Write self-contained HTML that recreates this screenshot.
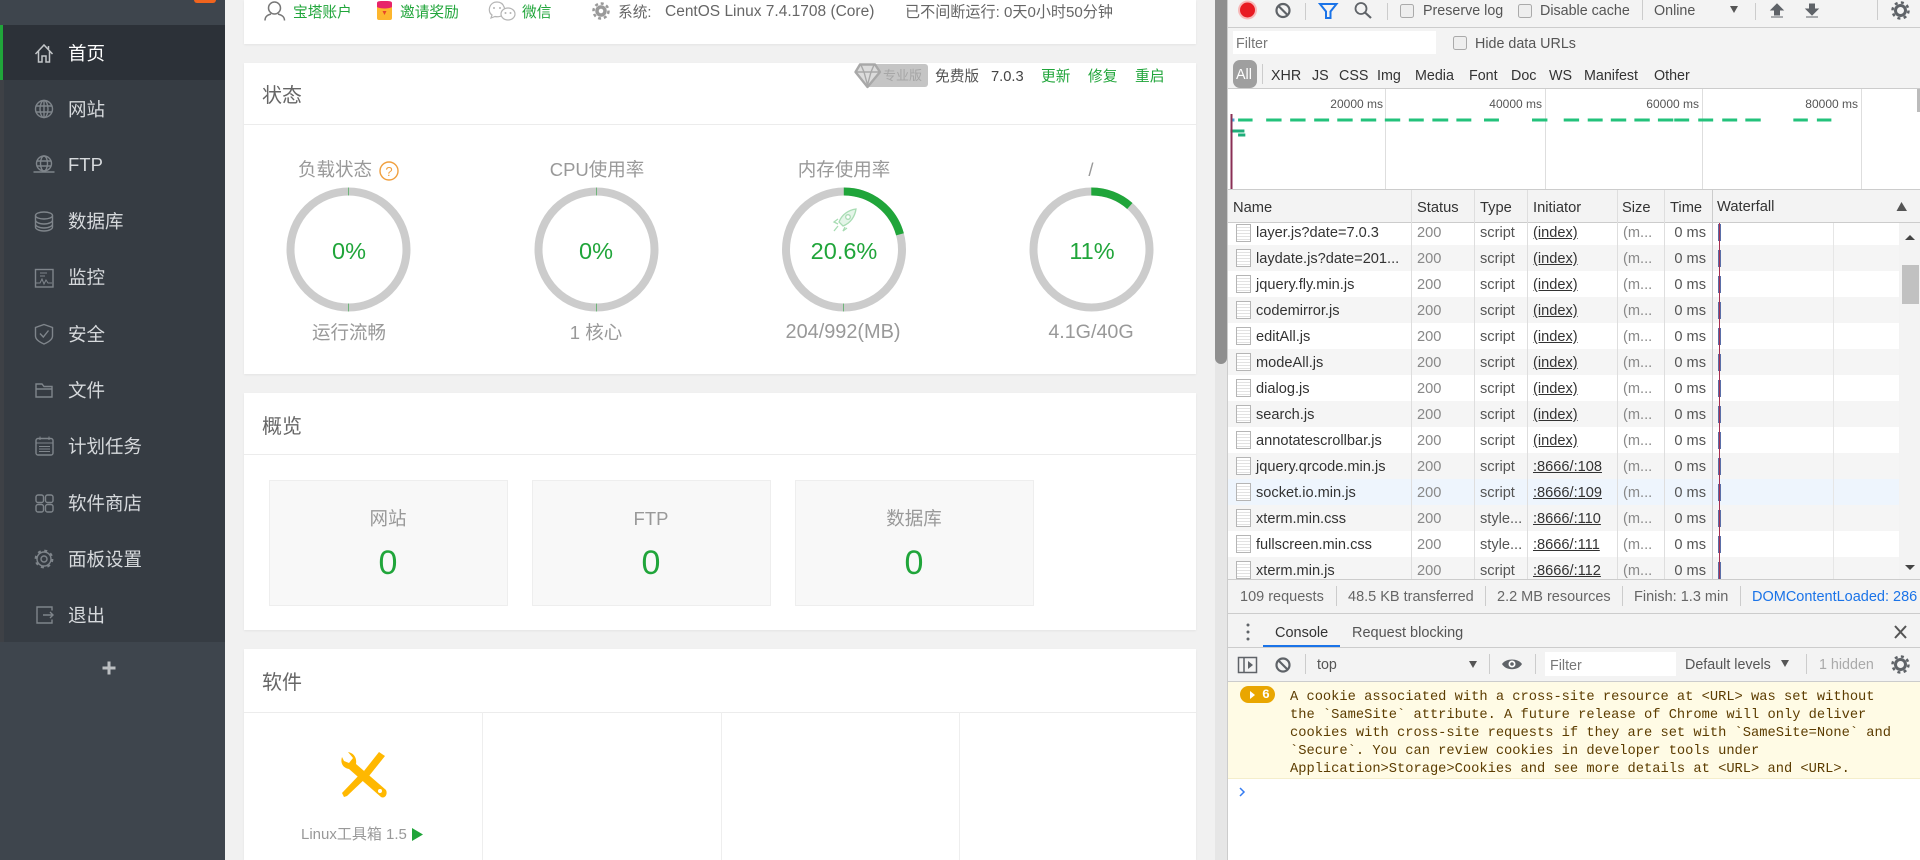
<!DOCTYPE html>
<html lang="zh-CN">
<head>
<meta charset="utf-8">
<title>宝塔面板</title>
<style>
html,body{margin:0;padding:0;width:1920px;height:860px;overflow:hidden;background:#fff}
body{position:relative;font-family:"Liberation Sans","Noto Sans CJK SC",sans-serif;color:#555}
.a{position:absolute}
.t{position:absolute;white-space:nowrap;line-height:20px;height:20px}
.c{transform:translateX(-50%)}
.card{position:absolute;left:244px;width:952px;background:#fff;box-shadow:0 1px 2px rgba(0,0,0,.06)}
.hl{position:absolute;left:244px;width:952px;height:1px;background:#ececec}
.m{font-size:18.5px;color:#d6d9dc;left:68px;line-height:24px;height:24px}
.ct{font-size:20px;color:#666;left:262px;line-height:28px;height:28px}
.tt{font-size:18.5px;color:#999;line-height:26px;height:26px}
.pc{font-size:23.5px;color:#20a53a;line-height:30px;height:30px}
.g{color:#20a53a;font-size:14.7px}
.box{position:absolute;top:480px;height:124px;background:#f8f8f8;border:1px solid #eee}
.bl{font-size:18.5px;color:#999;line-height:26px;height:26px}
.bn{font-size:34px;color:#20a53a;line-height:40px;height:40px}
.d{font-size:14.3px;color:#555}
.r{position:absolute;left:1228px;width:671px;height:26px;background:#fff;overflow:hidden;font-size:14.6px;line-height:26px}
.r.o{background:#f5f5f5}
.r span{position:absolute;top:1px;white-space:nowrap}
.r i{position:absolute;left:8px;top:4px;width:13px;height:16px;border:1px solid #b5b5b5;background:repeating-linear-gradient(#fff 0 2px,#e2e2e2 2px 3px);box-sizing:content-box}
.n{left:28px;color:#333}.s{left:189px;color:#888}.y{left:252px;color:#555}.q{left:305px;color:#333;text-decoration:underline}.z{left:395px;color:#888}
.e{left:439px;width:39px;text-align:right;color:#555}
.v{position:absolute;width:1px;background:#dedede}
.hd{font-size:14.7px;color:#333}
.ms{position:absolute;left:1290px;font-family:"Liberation Mono",monospace;font-size:13.73px;line-height:18px;color:#5c3c00;white-space:pre;top:689px}
</style>
</head>
<body>
<!-- Page background -->
<div class="a" style="left:225px;top:0;width:990px;height:860px;background:#f1f1f1"></div>
<!-- Sidebar -->
<div class="a" style="left:0;top:0;width:225px;height:860px;background:#3e454d"></div>
<div class="a" style="left:0;top:25px;width:225px;height:617px;background:#363c43"></div>
<div class="a" style="left:0;top:80px;width:4px;height:562px;background:#3e4146"></div>
<div class="a" style="left:0;top:25px;width:225px;height:55px;background:#2c3138"></div>
<div class="a" style="left:0;top:25px;width:3px;height:55px;background:#20a53a"></div>
<div class="a" style="left:194px;top:0;width:22px;height:3px;background:#f0641e;border-radius:0 0 4px 4px"></div>
<span class="t m" style="top:42px;color:#fff">首页</span>
<span class="t m" style="top:98px">网站</span>
<span class="t m" style="top:153px">FTP</span>
<span class="t m" style="top:210px">数据库</span>
<span class="t m" style="top:266px">监控</span>
<span class="t m" style="top:323px">安全</span>
<span class="t m" style="top:379px">文件</span>
<span class="t m" style="top:435px">计划任务</span>
<span class="t m" style="top:492px">软件商店</span>
<span class="t m" style="top:548px">面板设置</span>
<span class="t m" style="top:604px">退出</span>

<!-- Cards -->
<div class="card" style="top:0;height:44px"></div>
<div class="card" style="top:63px;height:311px"></div>
<div class="hl" style="top:124px"></div>
<div class="card" style="top:393px;height:237px"></div>
<div class="hl" style="top:454px"></div>
<div class="card" style="top:649px;height:211px"></div>
<div class="hl" style="top:712px"></div>
<div class="v" style="left:482px;top:712px;height:148px;background:#eee"></div>
<div class="v" style="left:721px;top:712px;height:148px;background:#eee"></div>
<div class="v" style="left:959px;top:712px;height:148px;background:#eee"></div>

<!-- Top row -->
<span class="t g" style="left:293px;top:3px">宝塔账户</span>
<span class="t g" style="left:400px;top:3px">邀请奖励</span>
<span class="t g" style="left:522px;top:3px">微信</span>
<span class="t" style="left:618px;top:3px;font-size:14.7px;color:#666">系统:</span>
<span class="t" style="left:665px;top:2px;font-size:15.5px;color:#666">CentOS Linux 7.4.1708 (Core)</span>
<span class="t" style="left:905px;top:3px;font-size:15.1px;color:#666">已不间断运行: 0天0小时50分钟</span>

<!-- Status -->
<span class="t ct" style="top:82px">状态</span>
<div class="a" style="left:866px;top:64px;width:62px;height:23px;background:#c5c5c5;border-radius:3px"></div>
<span class="t" style="left:883px;top:66px;font-size:13px;color:#a6a6a6">专业版</span>
<span class="t" style="left:935px;top:67px;font-size:14.7px;color:#555">免费版</span>
<span class="t" style="left:991px;top:67px;font-size:14.7px;color:#444">7.0.3</span>
<span class="t g" style="left:1041px;top:67px">更新</span>
<span class="t g" style="left:1088px;top:67px">修复</span>
<span class="t g" style="left:1135px;top:67px">重启</span>

<span class="t tt" style="left:298px;top:157px">负载状态</span>
<span class="t tt c" style="left:597px;top:157px">CPU使用率</span>
<span class="t tt c" style="left:844px;top:157px">内存使用率</span>
<span class="t tt c" style="left:1091px;top:157px">/</span>
<span class="t pc c" style="left:349px;top:236px">0%</span>
<span class="t pc c" style="left:596px;top:236px">0%</span>
<span class="t pc c" style="left:844px;top:236px">20.6%</span>
<span class="t pc c" style="left:1092px;top:236px">11%</span>
<span class="t tt c" style="left:349px;top:320px">运行流畅</span>
<span class="t tt c" style="left:596px;top:320px">1 核心</span>
<span class="t tt c" style="left:843px;top:319px;font-size:19.9px">204/992(MB)</span>
<span class="t tt c" style="left:1091px;top:319px;font-size:19.7px">4.1G/40G</span>

<!-- Overview -->
<span class="t ct" style="top:413px">概览</span>
<div class="box" style="left:269px;width:237px"></div>
<div class="box" style="left:532px;width:237px"></div>
<div class="box" style="left:795px;width:237px"></div>
<span class="t bl c" style="left:388px;top:506px">网站</span>
<span class="t bl c" style="left:651px;top:506px">FTP</span>
<span class="t bl c" style="left:914px;top:506px">数据库</span>
<span class="t bn c" style="left:388px;top:543px">0</span>
<span class="t bn c" style="left:651px;top:543px">0</span>
<span class="t bn c" style="left:914px;top:543px">0</span>

<!-- Software -->
<span class="t ct" style="top:669px">软件</span>
<span class="t" style="left:301px;top:825px;font-size:15px;color:#999">Linux工具箱 1.5</span>

<!-- Page scrollbar -->
<div class="a" style="left:1215px;top:0;width:12px;height:860px;background:#e6e6e6"></div>
<div class="a" style="left:1215px;top:0;width:12px;height:364px;background:#8f8f8f;border-radius:0 0 6px 6px"></div>

<!-- DevTools -->
<div class="a" style="left:1227px;top:0;width:693px;height:860px;background:#f3f3f3"></div>
<div class="a" style="left:1227px;top:0;width:1px;height:860px;background:#ccc"></div>
<div class="a" style="left:1228px;top:27px;width:692px;height:1px;background:#ccc"></div>
<div class="a" style="left:1233px;top:31px;width:203px;height:23px;background:#fff"></div>
<span class="t d" style="left:1236px;top:34px;color:#777">Filter</span>
<span class="t d" style="left:1423px;top:1px">Preserve log</span>
<span class="t d" style="left:1540px;top:1px">Disable cache</span>
<span class="t d" style="left:1654px;top:1px">Online</span>
<span class="t d" style="left:1475px;top:34px">Hide data URLs</span>
<div class="a" style="left:1233px;top:60px;width:24px;height:28px;background:#9f9f9f;border-radius:7px"></div>
<span class="t d" style="left:1236px;top:65px;color:#fff">All</span>
<div class="a" style="left:1262px;top:64px;width:1px;height:20px;background:#ccc"></div>
<span class="t d" style="left:1271px;top:66px;color:#333">XHR</span>
<span class="t d" style="left:1312px;top:66px;color:#333">JS</span>
<span class="t d" style="left:1339px;top:66px;color:#333">CSS</span>
<span class="t d" style="left:1377px;top:66px;color:#333">Img</span>
<span class="t d" style="left:1415px;top:66px;color:#333">Media</span>
<span class="t d" style="left:1469px;top:66px;color:#333">Font</span>
<span class="t d" style="left:1511px;top:66px;color:#333">Doc</span>
<span class="t d" style="left:1549px;top:66px;color:#333">WS</span>
<span class="t d" style="left:1584px;top:66px;color:#333">Manifest</span>
<span class="t d" style="left:1654px;top:66px;color:#333">Other</span>

<!-- Overview timeline -->
<div class="a" style="left:1228px;top:88px;width:692px;height:102px;background:#fff;border-top:1px solid #ccc;border-bottom:1px solid #ccc;box-sizing:border-box"></div>
<div class="v" style="left:1385px;top:89px;height:100px"></div>
<div class="v" style="left:1545px;top:89px;height:100px"></div>
<div class="v" style="left:1702px;top:89px;height:100px"></div>
<div class="v" style="left:1861px;top:89px;height:100px"></div>
<span class="t" style="right:537px;top:94px;font-size:12px;color:#555">20000 ms</span>
<span class="t" style="right:378px;top:94px;font-size:12px;color:#555">40000 ms</span>
<span class="t" style="right:221px;top:94px;font-size:12px;color:#555">60000 ms</span>
<span class="t" style="right:62px;top:94px;font-size:12px;color:#555">80000 ms</span>

<!-- Header row -->
<div class="a" style="left:1228px;top:190px;width:692px;height:33px;background:#f3f3f3;border-bottom:1px solid #ccc;box-sizing:border-box"></div>
<span class="t hd" style="left:1233px;top:198px">Name</span>
<span class="t hd" style="left:1417px;top:198px">Status</span>
<span class="t hd" style="left:1480px;top:198px">Type</span>
<span class="t hd" style="left:1533px;top:198px">Initiator</span>
<span class="t hd" style="left:1622px;top:198px">Size</span>
<span class="t hd" style="left:1670px;top:198px">Time</span>
<span class="t hd" style="left:1717px;top:197px">Waterfall</span>

<!-- Rows -->
<div class="r" style="top:223px;height:22px"><i style="top:1px"></i><span class="n" style="top:-3px">layer.js?date=7.0.3</span><span class="s" style="top:-3px">200</span><span class="y" style="top:-3px">script</span><span class="q" style="top:-3px">(index)</span><span class="z" style="top:-3px">(m...</span><span class="e" style="top:-3px">0 ms</span></div>
<div class="r o" style="top:245px"><i></i><span class="n">laydate.js?date=201...</span><span class="s">200</span><span class="y">script</span><span class="q">(index)</span><span class="z">(m...</span><span class="e">0 ms</span></div>
<div class="r" style="top:271px"><i></i><span class="n">jquery.fly.min.js</span><span class="s">200</span><span class="y">script</span><span class="q">(index)</span><span class="z">(m...</span><span class="e">0 ms</span></div>
<div class="r o" style="top:297px"><i></i><span class="n">codemirror.js</span><span class="s">200</span><span class="y">script</span><span class="q">(index)</span><span class="z">(m...</span><span class="e">0 ms</span></div>
<div class="r" style="top:323px"><i></i><span class="n">editAll.js</span><span class="s">200</span><span class="y">script</span><span class="q">(index)</span><span class="z">(m...</span><span class="e">0 ms</span></div>
<div class="r o" style="top:349px"><i></i><span class="n">modeAll.js</span><span class="s">200</span><span class="y">script</span><span class="q">(index)</span><span class="z">(m...</span><span class="e">0 ms</span></div>
<div class="r" style="top:375px"><i></i><span class="n">dialog.js</span><span class="s">200</span><span class="y">script</span><span class="q">(index)</span><span class="z">(m...</span><span class="e">0 ms</span></div>
<div class="r o" style="top:401px"><i></i><span class="n">search.js</span><span class="s">200</span><span class="y">script</span><span class="q">(index)</span><span class="z">(m...</span><span class="e">0 ms</span></div>
<div class="r" style="top:427px"><i></i><span class="n">annotatescrollbar.js</span><span class="s">200</span><span class="y">script</span><span class="q">(index)</span><span class="z">(m...</span><span class="e">0 ms</span></div>
<div class="r o" style="top:453px"><i></i><span class="n">jquery.qrcode.min.js</span><span class="s">200</span><span class="y">script</span><span class="q">:8666/:108</span><span class="z">(m...</span><span class="e">0 ms</span></div>
<div class="r" style="top:479px;background:#eef5fd"><i></i><span class="n">socket.io.min.js</span><span class="s">200</span><span class="y">script</span><span class="q">:8666/:109</span><span class="z">(m...</span><span class="e">0 ms</span></div>
<div class="r o" style="top:505px"><i></i><span class="n">xterm.min.css</span><span class="s">200</span><span class="y">style...</span><span class="q">:8666/:110</span><span class="z">(m...</span><span class="e">0 ms</span></div>
<div class="r" style="top:531px"><i></i><span class="n">fullscreen.min.css</span><span class="s">200</span><span class="y">style...</span><span class="q">:8666/:111</span><span class="z">(m...</span><span class="e">0 ms</span></div>
<div class="r o" style="top:557px;height:22px"><i></i><span class="n">xterm.min.js</span><span class="s">200</span><span class="y">script</span><span class="q">:8666/:112</span><span class="z">(m...</span><span class="e">0 ms</span></div>
<div class="v" style="left:1411px;top:190px;height:389px"></div>
<div class="v" style="left:1474px;top:190px;height:389px"></div>
<div class="v" style="left:1527px;top:190px;height:389px"></div>
<div class="v" style="left:1617px;top:190px;height:389px"></div>
<div class="v" style="left:1664px;top:190px;height:389px"></div>
<div class="v" style="left:1712px;top:190px;height:389px;background:#ccc"></div>
<div class="v" style="left:1833px;top:223px;height:356px;background:#e6e6e6"></div>
<div class="a" style="left:1899px;top:223px;width:21px;height:356px;background:#f3f3f3"></div>
<div class="a" style="left:1902px;top:265px;width:17px;height:39px;background:#c1c1c1"></div>

<!-- Status bar -->
<div class="a" style="left:1228px;top:579px;width:692px;height:1px;background:#ccc"></div>
<div class="a" style="left:1228px;top:613px;width:692px;height:1px;background:#ccc"></div>
<span class="t" style="left:1240px;top:587px;font-size:14.5px;color:#666">109 requests</span>
<span class="t" style="left:1348px;top:587px;font-size:14.5px;color:#666">48.5 KB transferred</span>
<span class="t" style="left:1497px;top:587px;font-size:14.5px;color:#666">2.2 MB resources</span>
<span class="t" style="left:1634px;top:587px;font-size:14.5px;color:#666">Finish: 1.3 min</span>
<div class="a" style="left:1752px;top:587px;width:168px;height:20px;overflow:hidden"><span class="t" style="left:0;top:0;font-size:14.5px;color:#1a73e8">DOMContentLoaded: 286 ms</span></div>
<div class="v" style="left:1336px;top:586px;height:20px;background:#ccc"></div>
<div class="v" style="left:1485px;top:586px;height:20px;background:#ccc"></div>
<div class="v" style="left:1622px;top:586px;height:20px;background:#ccc"></div>
<div class="v" style="left:1740px;top:586px;height:20px;background:#ccc"></div>

<!-- Drawer tabs -->
<span class="t" style="left:1275px;top:623px;font-size:14.5px;color:#333">Console</span>
<span class="t" style="left:1352px;top:623px;font-size:14.5px;color:#555">Request blocking</span>
<div class="a" style="left:1263px;top:645px;width:77px;height:2px;background:#1a73e8"></div>
<div class="a" style="left:1228px;top:647px;width:692px;height:1px;background:#ccc"></div>

<!-- Console toolbar -->
<span class="t d" style="left:1317px;top:655px">top</span>
<div class="a" style="left:1545px;top:652px;width:131px;height:24px;background:#fff"></div>
<span class="t d" style="left:1550px;top:656px;color:#777">Filter</span>
<span class="t d" style="left:1685px;top:655px">Default levels</span>
<span class="t d" style="left:1819px;top:655px;color:#aaa">1 hidden</span>
<div class="v" style="left:1305px;top:654px;height:20px;background:#ccc"></div>
<div class="v" style="left:1489px;top:654px;height:20px;background:#ccc"></div>
<div class="v" style="left:1535px;top:654px;height:20px;background:#ccc"></div>
<div class="v" style="left:1806px;top:654px;height:20px;background:#ccc"></div>
<div class="a" style="left:1228px;top:681px;width:692px;height:1px;background:#ccc"></div>

<!-- Console area -->
<div class="a" style="left:1228px;top:682px;width:692px;height:178px;background:#fff"></div>
<div class="a" style="left:1228px;top:682px;width:692px;height:97px;background:#fffbe5;border-bottom:1px solid #f5eecb;box-sizing:border-box"></div>
<div class="a" style="left:1240px;top:686px;width:35px;height:17px;background:#e9a600;border-radius:9px"></div>
<span class="t" style="left:1262px;top:687px;height:16px;line-height:16px;font-family:'Liberation Mono',monospace;font-weight:bold;font-size:13px;color:#fff">6</span>
<div class="ms">A cookie associated with a cross-site resource at &lt;URL&gt; was set without
the `SameSite` attribute. A future release of Chrome will only deliver
cookies with cross-site requests if they are set with `SameSite=None` and
`Secure`. You can review cookies in developer tools under
Application&gt;Storage&gt;Cookies and see more details at &lt;URL&gt; and &lt;URL&gt;.</div>

<!-- All icons / graphic overlay -->
<svg class="a" style="left:0;top:0" width="1920" height="860" viewBox="0 0 1920 860" fill="none">
  <!-- Status circles -->
  <g stroke-width="8">
    <circle cx="348.5" cy="249.5" r="58" stroke="#ccc"/>
    <circle cx="596.5" cy="249.5" r="58" stroke="#ccc"/>
    <circle cx="844" cy="249.5" r="58" stroke="#ccc"/>
    <circle cx="1091.5" cy="249.5" r="58" stroke="#ccc"/>
    <circle cx="844" cy="249.5" r="58" stroke="#20a53a" pathLength="100" stroke-dasharray="20.8 79.2" transform="rotate(-90 844 249.5)"/>
    <circle cx="1091.5" cy="249.5" r="58" stroke="#20a53a" pathLength="100" stroke-dasharray="11.5 88.5" transform="rotate(-90 1091.5 249.5)"/>
  </g>
  <path d="M348.5 187.500V195.500M348.500 303.500V311.500M596.500 187.500V195.500M596.500 303.500V311.500M843.500 303.500V311.500" stroke="#6fb57a" stroke-width="1"/>
  <!-- Question mark -->
  <circle cx="389" cy="171" r="9" stroke="#f0a040" stroke-width="1.400"/>
  <text x="389" y="176" font-size="13" fill="#f0a040" text-anchor="middle" font-family="Liberation Sans">?</text>
  <!-- Rocket -->
  <g stroke="#a8dcb3" stroke-width="1.300" fill="#e4f5e8">
    <path d="M856 209C849 210 842 214 839 222L843 226C851 223 855 216 856 209Z"/>
    <circle cx="848" cy="217" r="2.300" fill="#fff"/>
    <path d="M838 219L834 222L838 224M845 227L843 231L847 228M838 226L834 231" fill="none"/>
  </g>
  <!-- Sidebar icons -->
  <g stroke="#7f858b" stroke-width="1.400">
    <path d="M35.500 54L44 45L52.500 54M38.500 51V62H42V56H46V62H49.500V51M48.500 46V49" stroke="#c2c5c8" stroke-width="1.500"/>
    <circle cx="44" cy="109" r="8.500"/><ellipse cx="44" cy="109" rx="4" ry="8.500"/><path d="M36 106H52M36 112H52M44 100.500V117.500"/>
    <circle cx="44" cy="163.500" r="7.500"/><ellipse cx="44" cy="163.500" rx="3.500" ry="7.500"/><path d="M37 161H51M37 166H51M33.500 172H54.500"/>
    <ellipse cx="44" cy="215.500" rx="8.500" ry="3.500"/><path d="M35.500 215.500V227C35.500 229 39 231 44 231S52.500 229 52.500 227V215.500M35.500 220C35.500 222 39 224 44 224S52.500 222 52.500 220M35.500 224C35.500 226 39 228 44 228S52.500 226 52.500 224"/>
    <rect x="35.500" y="269.500" width="17.500" height="17.500"/><path d="M36 283L40 283L42 279L44 284L46 280L48 283L52 283M40 273H47M40 276H45" stroke-width="1"/>
    <path d="M44 324.500L52.500 327.500V336C52.500 340 47.500 342.500 44 344C40.500 342.500 35.500 340 35.500 336V327.500Z"/><path d="M40 333.500L43.300 337L48.500 330.500"/>
    <path d="M36 397V384H42L44 386.500H52V397ZM36 389H52"/>
    <rect x="36" y="438.500" width="17" height="16.500" rx="2"/><path d="M36 443H53M40 436.500V440M49 436.500V440M39 446.500H50M39 449H50M39 451.500H50" stroke-width="1"/>
    <rect x="36" y="495" width="7.500" height="7.500" rx="2"/><rect x="45.500" y="495" width="7.500" height="7.500" rx="2"/><rect x="36" y="504.500" width="7.500" height="7.500" rx="2"/><rect x="45.500" y="504.500" width="7.500" height="7.500" rx="2"/>
    <circle cx="44" cy="559" r="7"/><circle cx="44" cy="559" r="3"/><circle cx="44" cy="559" r="8.400" stroke-width="2" stroke-dasharray="3 3.600"/>
    <path d="M52 610.500V607H37V623H52V619.500M43 615H53M50 612L53 615L50 618"/>
  </g>
  <path d="M102.500 668H115.500M109 661.500V674.500" stroke="#bcbfc2" stroke-width="3"/>
  <!-- Top row icons -->
  <g stroke="#777" stroke-width="1.500">
    <circle cx="274.500" cy="8" r="6"/><path d="M265 20.500C265 16 268 15 271 14M284.500 20.500C284.500 16 281 15 278 14"/>
  </g>
  <rect x="377" y="3" width="15" height="17" rx="2" fill="#fdb62e"/>
  <path d="M377 3C377 1 380 1 384.500 1S392 1 392 3V7C389 9 380 9 377 7Z" fill="#e7246a"/>
  <path d="M382.500 11H386.500L384.500 15Z" fill="#e7462a"/>
  <g stroke="#b5b5b5" stroke-width="1.200">
    <path d="M504 15C506 12 505 2 497 2C489 2 487 12 492 15L491 18L495 16.500C497 17 500 16.800 504 15Z"/>
    <ellipse cx="508" cy="14" rx="7" ry="6" fill="#fff"/>
  </g>
  <g fill="#b5b5b5"><circle cx="494" cy="8" r="1"/><circle cx="500" cy="8" r="1"/><circle cx="505.500" cy="13" r="1"/><circle cx="510.500" cy="13" r="1"/></g>
  <circle cx="601" cy="11" r="4" stroke="#9a9a9a" stroke-width="3.500"/>
  <circle cx="601" cy="11" r="7.500" stroke="#9a9a9a" stroke-width="2.500" stroke-dasharray="3 2.800"/>
  <!-- Diamond -->
  <path d="M860 64.500H875L880 72L867.500 87L855.500 72Z" fill="#dcdcdc" stroke="#a8a8a8" stroke-width="2.400" stroke-linejoin="round"/>
  <path d="M856 72H879.500M861 65L864 72L867.500 85M874 65L871 72L867.500 85" stroke="#a8a8a8" stroke-width="1.400"/>
  <!-- Tools icon -->
  <g fill="#ffb800">
    <path d="M385 756L379 752L364 771L369 776Z"/>
    <path d="M344 797L342 793L362 772L367 777L347 796Z"/>
    <path d="M342 757C340 763 343 768 349 769L381 797C385 799 388 794 386 790L356 764C357 758 354 753 348 752L353 758L349 763L344 761Z"/>
  </g>
  <circle cx="380" cy="791" r="2" fill="#fff"/>
  <path d="M412 828L423 834.500L412 841Z" fill="#20a53a"/>
  <!-- Timeline dashes -->
  <g transform="translate(1210 0) scale(.4529 1)" stroke="#23c27b" stroke-width="3">
    <path d="M62 120H94M124 120H158M177 120H211M230 120H263M281 120H315M333 120H367M386 120H420M439 120H472M491 120H526M544 120H577M605 120H638M711 120H745M781 120H815M834 120H867M885 120H919M937 120H971M989 120H1023M1025 120H1058M1078 120H1111M1131 120H1164M1182 120H1216M1288 120H1320M1340 120H1372"/>
    <path d="M45 131H76M62 135H78" stroke="#1fae7a"/>
    <path d="M46 120H54" stroke="#4aa8d8"/>
  </g>
  <path d="M1231.500 114V189" stroke="#8a2f55" stroke-width="2"/>
  <rect x="1917" y="89" width="3" height="23" fill="#bbb"/>
  <!-- Waterfall row ticks -->
  <path d="M1719.500 224V579" stroke="#5b6fa8" stroke-width="3" stroke-dasharray="17 9"/>
  <path d="M1719.500 223V579" stroke="#a83050" stroke-width="1"/>
  <!-- DevTools top toolbar -->
  <circle cx="1247.500" cy="10" r="9.500" fill="#f7b8b8"/>
  <circle cx="1247.500" cy="10" r="7.500" fill="#e81a22"/>
  <circle cx="1283" cy="10.500" r="6.500" stroke="#5f6368" stroke-width="2.200"/><path d="M1278.500 6L1287.500 15" stroke="#5f6368" stroke-width="2.200"/>
  <path d="M1320 4H1336.500L1330.500 11.500V18H1326V11.500Z" stroke="#1a73e8" stroke-width="2"/>
  <circle cx="1361" cy="8.500" r="5.500" stroke="#5f6368" stroke-width="1.800"/><path d="M1365 12.500L1371 18" stroke="#5f6368" stroke-width="2.200"/>
  <g stroke="#ccc"><path d="M1305.500 3V20M1387.500 3V20M1642.500 0V20M1755.500 3V20M1877.500 0V20"/></g>
  <g fill="#eee" stroke="#aaa"><rect x="1400.500" y="4.500" width="13" height="13" rx="2"/><rect x="1518.500" y="4.500" width="13" height="13" rx="2"/><rect x="1453.500" y="36.500" width="13" height="13" rx="2"/></g>
  <path d="M1730 6H1738L1734 13Z" fill="#555"/>
  <path d="M1777 4L1783 10H1779.500V15H1774.500V10H1771ZM1771 17H1783" stroke="#5f6368" fill="#5f6368" stroke-width="1"/>
  <path d="M1812 15L1806 9H1809.500V4H1814.500V9H1818ZM1806 17H1818" stroke="#5f6368" fill="#5f6368" stroke-width="1"/>
  <circle cx="1900.500" cy="10.500" r="5" stroke="#5f6368" stroke-width="3"/><circle cx="1900.500" cy="10.500" r="8" stroke="#5f6368" stroke-width="2.500" stroke-dasharray="3 3.300"/>
  <path d="M1901.500 202L1896.500 211H1907Z" fill="#555"/>
  <path d="M1905 240H1915L1910 235Z" fill="#444"/><path d="M1905 565H1915L1910 570Z" fill="#444"/>
  <!-- Drawer -->
  <g fill="#5f6368"><circle cx="1248" cy="625" r="1.500"/><circle cx="1248" cy="632" r="1.500"/><circle cx="1248" cy="639" r="1.500"/></g>
  <path d="M1895 626L1906 638M1906 626L1895 638" stroke="#555" stroke-width="2"/>
  <!-- Console toolbar -->
  <rect x="1238.500" y="657.500" width="18" height="15" stroke="#5f6368" stroke-width="1.500"/><path d="M1244 657.500V672.500" stroke="#5f6368" stroke-width="1.500"/><path d="M1248 661L1253 665L1248 669Z" fill="#5f6368"/>
  <circle cx="1283" cy="665" r="6.500" stroke="#5f6368" stroke-width="2.200"/><path d="M1278.500 660.500L1287.500 669.500" stroke="#5f6368" stroke-width="2.200"/>
  <path d="M1469 661H1477L1473 668Z" fill="#555"/>
  <path d="M1502 664C1506 658 1518 658 1522 664C1518 671 1506 671 1502 664Z" fill="#5f6368"/><circle cx="1512" cy="664" r="3.500" fill="#fff"/><circle cx="1512" cy="664" r="1.800" fill="#5f6368"/>
  <path d="M1781 660H1789L1785 667Z" fill="#555"/>
  <circle cx="1900.500" cy="664.500" r="5" stroke="#5f6368" stroke-width="3"/><circle cx="1900.500" cy="664.500" r="8" stroke="#5f6368" stroke-width="2.500" stroke-dasharray="3 3.300"/>
  <path d="M1250 691L1255 695L1250 699Z" fill="#fff"/>
  <path d="M1240 788L1244 792L1240 796" stroke="#367cf1" stroke-width="1.500"/>
</svg>
</body>
</html>
